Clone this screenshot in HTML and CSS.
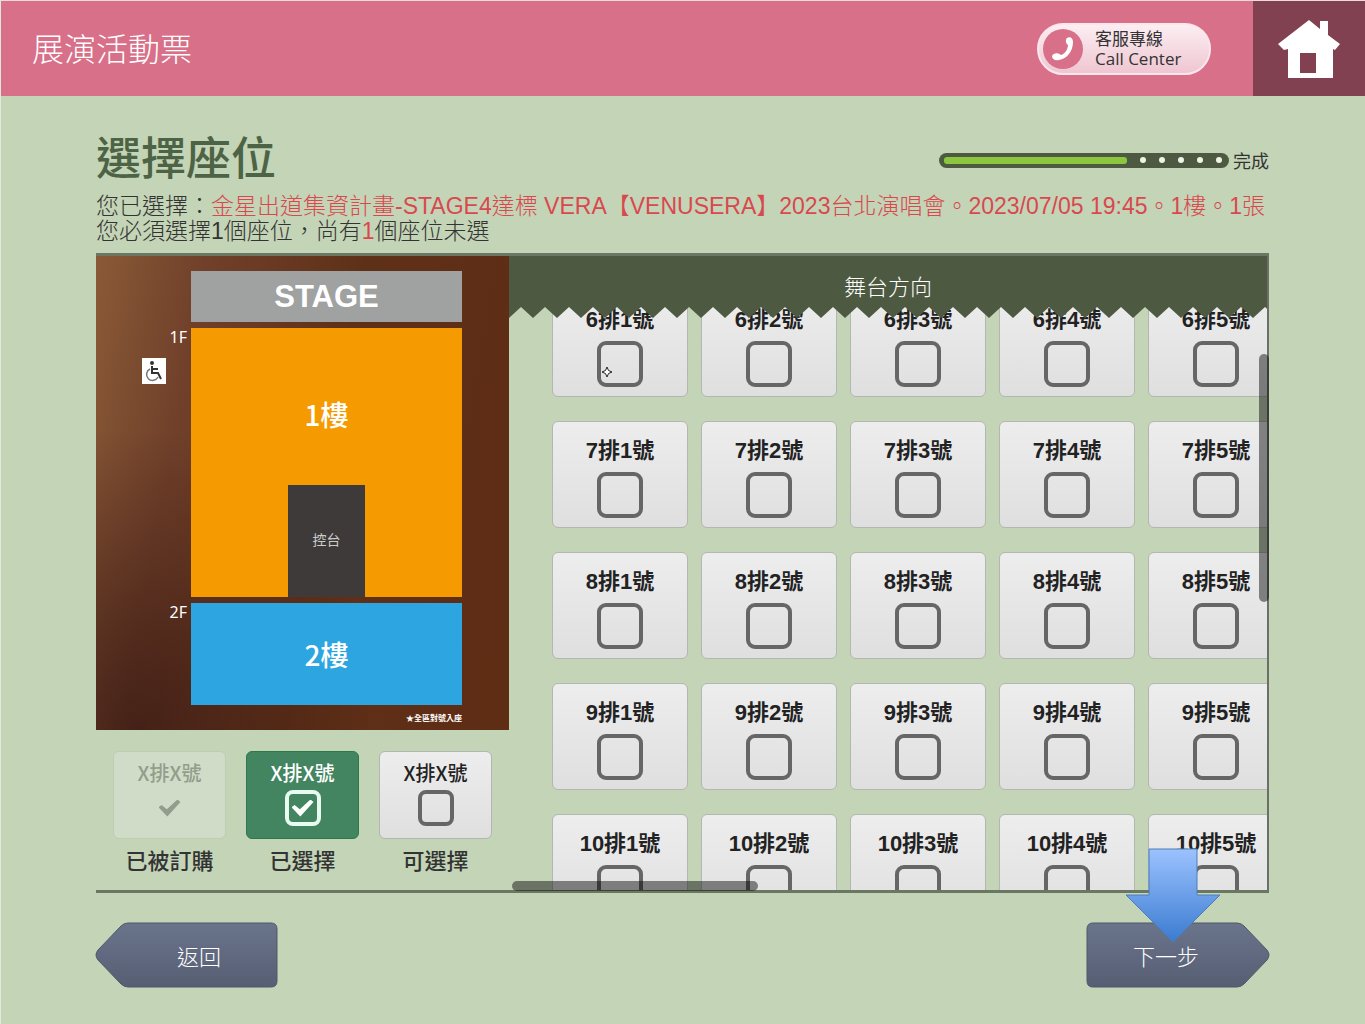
FILE: index.html
```html
<!DOCTYPE html>
<html lang="zh-Hant">
<head>
    <meta charset="UTF-8">
    <meta name="viewport" content="width=device-width, initial-scale=1.0">
    <title>展演活動票</title>
    <link rel="stylesheet" href="styles.css">
</head>
<body>
    <header class="topbar">
        <div class="topbar-title">展演活動票</div>
        <button class="call-btn" type="button">
            <svg class="call-icon" viewBox="0 0 40 40" aria-hidden="true">
                <circle cx="20" cy="20" r="20" fill="#d87089"/>
                <path d="M24 9c3-2 6 0 6 4 0 9-6 17-14 18-4 1-7-1-7-4 1-3 6-4 9-1 4-1 7-6 7-10-2-1-3-5-1-7z" fill="#fff"/>
            </svg>
            <span class="call-text"><span>客服專線</span><span>Call Center</span></span>
        </button>
        <a class="home-btn" href="#" aria-label="首頁">
            <svg viewBox="0 0 62 58" aria-hidden="true">
                <path fill="#fff" fill-rule="evenodd" d="M31 0 42 9V1h8v14l12 9-5 6-2-1v29H10V29l-4 1-6-6zM22 33v20h16V33z"/>
            </svg>
        </a>
    </header>

    <main class="content">
        <div class="heading">
            <h1>選擇座位</h1>
            <div class="progress">
                <div class="progress-track">
                    <div class="progress-done"></div>
                    <i></i><i></i><i></i><i></i><i></i>
                </div>
                <span>完成</span>
            </div>
        </div>
        <p class="summary">您已選擇：<span class="red">金星出道集資計畫-STAGE4達標 VERA【VENUSERA】2023台北演唱會。2023/07/05 19:45。1樓。1張</span><br>您必須選擇1個座位，尚有<span class="red">1</span>個座位未選</p>

        <div class="panel">
            <div class="side">
                <div class="map">
                    <div class="stage">STAGE</div>
                    <div class="floor-label">
                        <span>1F</span>
                        <svg class="wheelchair" viewBox="0 0 24 26" role="img" aria-label="輪椅席">
                            <path fill="#fff" d="M0 0h24v26H0z"/>
                            <circle cx="10" cy="5" r="2" fill="#333"/>
                            <path d="M10 8v7h6l3 6M10 11h6" fill="none" stroke="#333" stroke-width="2"/>
                            <path d="M8 11a6 6 0 1 0 8 8" fill="none" stroke="#777" stroke-width="1.5"/>
                        </svg>
                    </div>
                    <div class="floor floor-1">
                        <span>1樓</span>
                        <div class="console">控台</div>
                    </div>
                    <div class="floor-label">2F</div>
                    <div class="floor floor-2">2樓</div>
                    <div class="map-note">★全區對號入座</div>
                </div>
                <div class="legend">
                    <div class="legend-item">
                        <label class="seat small booked">X排X號<input type="checkbox" checked disabled></label>
                        <span>已被訂購</span>
                    </div>
                    <div class="legend-item">
                        <label class="seat small picked">X排X號<input type="checkbox" checked></label>
                        <span>已選擇</span>
                    </div>
                    <div class="legend-item">
                        <label class="seat small">X排X號<input type="checkbox"></label>
                        <span>可選擇</span>
                    </div>
                </div>
            </div>

            <div class="seat-pane">
                <div class="direction">
                    <div class="direction-text">舞台方向</div>
                    <svg class="zigzag" aria-hidden="true">
                        <pattern id="teeth" width="24" height="11" patternUnits="userSpaceOnUse">
                            <path d="M0 0H24V11L12 0 0 11z" fill="#4d5a41"/>
                        </pattern>
                        <rect width="100%" height="11" fill="url(#teeth)"/>
                    </svg>
                </div>
                <div class="seats">
                    <label class="seat">6排1號<input type="checkbox">
                        <svg class="pointer" viewBox="0 0 12 12" aria-hidden="true"><path d="M6 1 7.500 4.500 11 6 7.500 7.500 6 11 4.500 7.500 1 6 4.500 4.500z" fill="#fff" stroke="#222"/></svg>
                    </label>
                    <label class="seat">6排2號<input type="checkbox"></label>
                    <label class="seat">6排3號<input type="checkbox"></label>
                    <label class="seat">6排4號<input type="checkbox"></label>
                    <label class="seat">6排5號<input type="checkbox"></label>

                    <label class="seat">7排1號<input type="checkbox"></label>
                    <label class="seat">7排2號<input type="checkbox"></label>
                    <label class="seat">7排3號<input type="checkbox"></label>
                    <label class="seat">7排4號<input type="checkbox"></label>
                    <label class="seat">7排5號<input type="checkbox"></label>

                    <label class="seat">8排1號<input type="checkbox"></label>
                    <label class="seat">8排2號<input type="checkbox"></label>
                    <label class="seat">8排3號<input type="checkbox"></label>
                    <label class="seat">8排4號<input type="checkbox"></label>
                    <label class="seat">8排5號<input type="checkbox"></label>

                    <label class="seat">9排1號<input type="checkbox"></label>
                    <label class="seat">9排2號<input type="checkbox"></label>
                    <label class="seat">9排3號<input type="checkbox"></label>
                    <label class="seat">9排4號<input type="checkbox"></label>
                    <label class="seat">9排5號<input type="checkbox"></label>

                    <label class="seat">10排1號<input type="checkbox"></label>
                    <label class="seat">10排2號<input type="checkbox"></label>
                    <label class="seat">10排3號<input type="checkbox"></label>
                    <label class="seat">10排4號<input type="checkbox"></label>
                    <label class="seat">10排5號<input type="checkbox"></label>
                </div>
                <div class="scroll-y"></div>
                <div class="scroll-x"></div>
            </div>
        </div>

        <div class="actions">
            <button class="nav-btn back" type="button">
                <svg viewBox="0 0 182 64" aria-hidden="true">
                    <defs>
                        <linearGradient id="slate" x1="0" y1="0" x2="0" y2="1">
                            <stop offset="0" stop-color="#6a748b"/>
                            <stop offset="1" stop-color="#565e73"/>
                        </linearGradient>
                    </defs>
                    <path d="M32 0H175Q181 0 181 6V58Q181 64 175 64H32Q28 64 25 61L2 37Q-2 32 2 27L25 3Q28 0 32 0z" fill="url(#slate)" stroke="#4f586b"/>
                </svg>
                <span>返回</span>
            </button>
            <button class="nav-btn next" type="button">
                <svg viewBox="0 0 182 64" aria-hidden="true">
                    <path d="M150 0H6Q0 0 0 6V58Q0 64 6 64H150Q154 64 157 61L180 37Q184 32 180 27L157 3Q154 0 150 0z" fill="url(#slate)" stroke="#4f586b"/>
                </svg>
                <span>下一步</span>
                <svg class="arrow" viewBox="0 0 96 96" aria-hidden="true">
                    <defs>
                        <linearGradient id="blue" x1="0" y1="0" x2="0" y2="1">
                            <stop offset="0" stop-color="#9cc2ff"/>
                            <stop offset="1" stop-color="#3a7bd0"/>
                        </linearGradient>
                    </defs>
                    <path d="M24 1H72V47H95L48 94 1 47H24z" fill="url(#blue)" stroke="#4a7ebb"/>
                </svg>
            </button>
        </div>
    </main>
</body>
</html>
```

FILE: styles.css
```css
* {
    box-sizing: border-box;
}
body {
    margin: 0;
    min-height: 100vh;
    font-family: "Liberation Sans", "Noto Sans CJK TC", sans-serif;
    color: #333;
    background-color: #c4d4b6;
    border-top: 1px solid #f0d9dc;
    border-left: 1px solid #e2e8dc;
}
button {
    font-family: inherit;
    border: none;
    padding: 0;
    cursor: pointer;
}

/* top bar */
.topbar {
    display: flex;
    align-items: center;
    height: 95px;
    padding-left: 31px;
    background-color: #d87089;
}
.topbar-title {
    flex: 1;
    padding-bottom: 4px;
    color: #fff;
    font-size: 32px;
    font-weight: 300;
}
.call-btn {
    display: flex;
    align-items: center;
    gap: 12px;
    width: 174px;
    height: 52px;
    margin-right: 42px;
    padding-left: 4px;
    border: 2px solid #fbe6ec;
    border-radius: 26px;
    background: linear-gradient(#fbeef2, #efc6d2);
    color: #333;
}
.call-icon {
    width: 40px;
    height: 40px;
}
.call-text {
    display: flex;
    flex-direction: column;
    font-family: "Open Sans", "Noto Sans CJK TC", sans-serif;
    font-size: 17px;
    line-height: 20px;
    text-align: left;
}
.home-btn {
    display: flex;
    align-items: center;
    justify-content: center;
    width: 112px;
    height: 100%;
    background-color: #824150;
}
.home-btn svg {
    width: 62px;
    height: 58px;
}

/* heading */
.content {
    padding: 34px 96px 36px 95px;
}
.heading {
    display: flex;
    align-items: center;
    justify-content: space-between;
}
h1 {
    margin: 0;
    color: #4d6345;
    font-size: 45px;
    font-weight: 500;
    line-height: 60px;
}
.progress {
    display: flex;
    align-items: center;
    gap: 4px;
    font-size: 18px;
}
.progress-track {
    display: flex;
    align-items: center;
    gap: 13px;
    width: 290px;
    height: 15px;
    padding: 0 7px 0 5px;
    border-radius: 8px;
    background-color: #4d5a41;
}
.progress-done {
    flex: 1;
    height: 7px;
    border-radius: 3px;
    background-color: #8cc63f;
}
.progress-track i {
    width: 6px;
    height: 6px;
    border-radius: 50%;
    background-color: #eef4e6;
}
.summary {
    margin: 4px 0 9px;
    font-size: 23px;
    font-weight: 300;
    line-height: 25px;
}
.red {
    color: #d9484f;
}

/* map and seats */
.panel {
    display: grid;
    grid-template-columns: 413px 1fr;
    border-top: 3px solid #6b7763;
    border-bottom: 3px solid #6b7763;
}
.map {
    display: grid;
    grid-template-columns: 91px 1fr;
    grid-template-rows: 51px 269px 102px auto;
    gap: 6px 4px;
    padding: 15px 47px 4px 0;
    background: radial-gradient(ellipse at 10% 100%, rgba(50, 20, 15, 0.7), transparent 45%), linear-gradient(100deg, #8a5a37, #70402a 22%, #5f3018 55%, #5f2c14);
    color: #fff;
}
.stage {
    grid-column: 2;
    background-color: #a0a1a1;
    font-size: 31px;
    font-weight: bold;
    line-height: 51px;
    text-align: center;
}
.floor-label {
    display: flex;
    flex-direction: column;
    align-items: flex-end;
    gap: 19px;
    font-family: "Noto Sans", sans-serif;
    font-size: 16px;
    line-height: 18px;
}
.floor-label span {
    height: 11px;
}
.wheelchair {
    width: 24px;
    height: 26px;
    margin-right: 21px;
}
.floor {
    display: flex;
    flex-direction: column;
    align-items: center;
    font-family: "Noto Sans CJK TC", sans-serif;
    font-size: 28px;
    font-weight: 500;
}
.floor-1 {
    justify-content: space-between;
    padding-top: 66px;
    background-color: #f59a00;
}
.floor-2 {
    justify-content: center;
    background-color: #2da5e1;
}
.console {
    width: 77px;
    height: 112px;
    background-color: #3e3a39;
    color: #ccc;
    font-size: 14px;
    font-weight: 400;
    line-height: 108px;
    text-align: center;
}
.map-note {
    grid-column: 2;
    font-size: 8px;
    font-weight: bold;
    line-height: 15px;
    text-align: right;
}
.legend {
    display: flex;
    gap: 20px;
    padding: 21px 17px 11px;
}
.legend-item {
    display: flex;
    flex-direction: column;
    gap: 6px;
    width: 113px;
    font-size: 22px;
    font-weight: 500;
    line-height: 34px;
    text-align: center;
}
.seat-pane {
    position: relative;
    display: flex;
    flex-direction: column;
    min-width: 0;
    border-right: 2px solid #6b6f68;
}
.direction {
    position: absolute;
    top: 0;
    left: 0;
    z-index: 1;
    width: 100%;
}
.direction-text {
    height: 51px;
    background-color: #4d5a41;
    color: #fff;
    font-size: 22px;
    font-weight: 300;
    line-height: 64px;
    text-align: center;
}
.zigzag {
    display: block;
    width: 100%;
    height: 11px;
}
.seats {
    display: grid;
    grid-template-columns: repeat(5, 136px);
    align-content: start;
    gap: 24px 13px;
    flex: 1 1 0;
    min-height: 0;
    padding: 34px 0 0 43px;
    overflow: hidden;
}
.seat {
    position: relative;
    display: flex;
    flex-direction: column;
    align-items: center;
    gap: 6px;
    height: 107px;
    padding-top: 14px;
    border: 1px solid #b4b6b2;
    border-radius: 6px;
    background: linear-gradient(#ededed, #dfdfdf);
    color: #222;
    font-size: 22px;
    font-weight: bold;
    line-height: 30px;
    cursor: pointer;
}
.seat input {
    appearance: none;
    display: grid;
    place-items: center;
    width: 46px;
    height: 46px;
    margin: 0;
    border: 4px solid #666;
    border-radius: 9px;
}
.seat input:checked::before {
    content: "";
    width: 22px;
    height: 17px;
    background-color: currentColor;
    clip-path: polygon(0 45%, 14% 32%, 38% 58%, 86% 0, 100% 14%, 40% 100%);
}
.seat.small {
    gap: 3px;
    height: 88px;
    padding-top: 7px;
    font-family: "Noto Sans CJK TC", sans-serif;
    font-size: 20px;
    font-weight: 500;
    line-height: 28px;
}
.small input {
    width: 36px;
    height: 36px;
    border-radius: 8px;
    color: inherit;
}
.seat.booked {
    border-color: #bfcdb5;
    background: #d0dbc8;
    color: #929d8b;
}
.booked input {
    border-color: transparent;
}
.seat.picked {
    border-color: #2a7a4c;
    background: #428560;
    color: #fff;
}
.picked input {
    border-color: #e8fbf0;
}
.pointer {
    position: absolute;
    bottom: 18px;
    left: 48px;
    width: 12px;
    height: 12px;
}
.scroll-y,
.scroll-x {
    position: absolute;
    border-radius: 5px;
    background-color: rgba(0, 0, 0, 0.45);
}
.scroll-y {
    top: 98px;
    right: -2px;
    width: 10px;
    height: 248px;
}
.scroll-x {
    bottom: -1px;
    left: 3px;
    width: 246px;
    height: 10px;
}

/* bottom buttons */
.actions {
    display: flex;
    justify-content: space-between;
    padding-top: 30px;
}
.nav-btn {
    position: relative;
    width: 182px;
    height: 64px;
    background: none;
    color: #fff;
    font-size: 22px;
    font-weight: 300;
}
.nav-btn svg {
    position: absolute;
    top: 0;
    left: 0;
    width: 100%;
    height: 100%;
    overflow: visible;
}
.nav-btn span {
    position: relative;
}
.back {
    padding-left: 24px;
}
.next {
    padding-right: 24px;
}
.nav-btn .arrow {
    top: -75px;
    left: 38px;
    width: 96px;
    height: 96px;
}
```
